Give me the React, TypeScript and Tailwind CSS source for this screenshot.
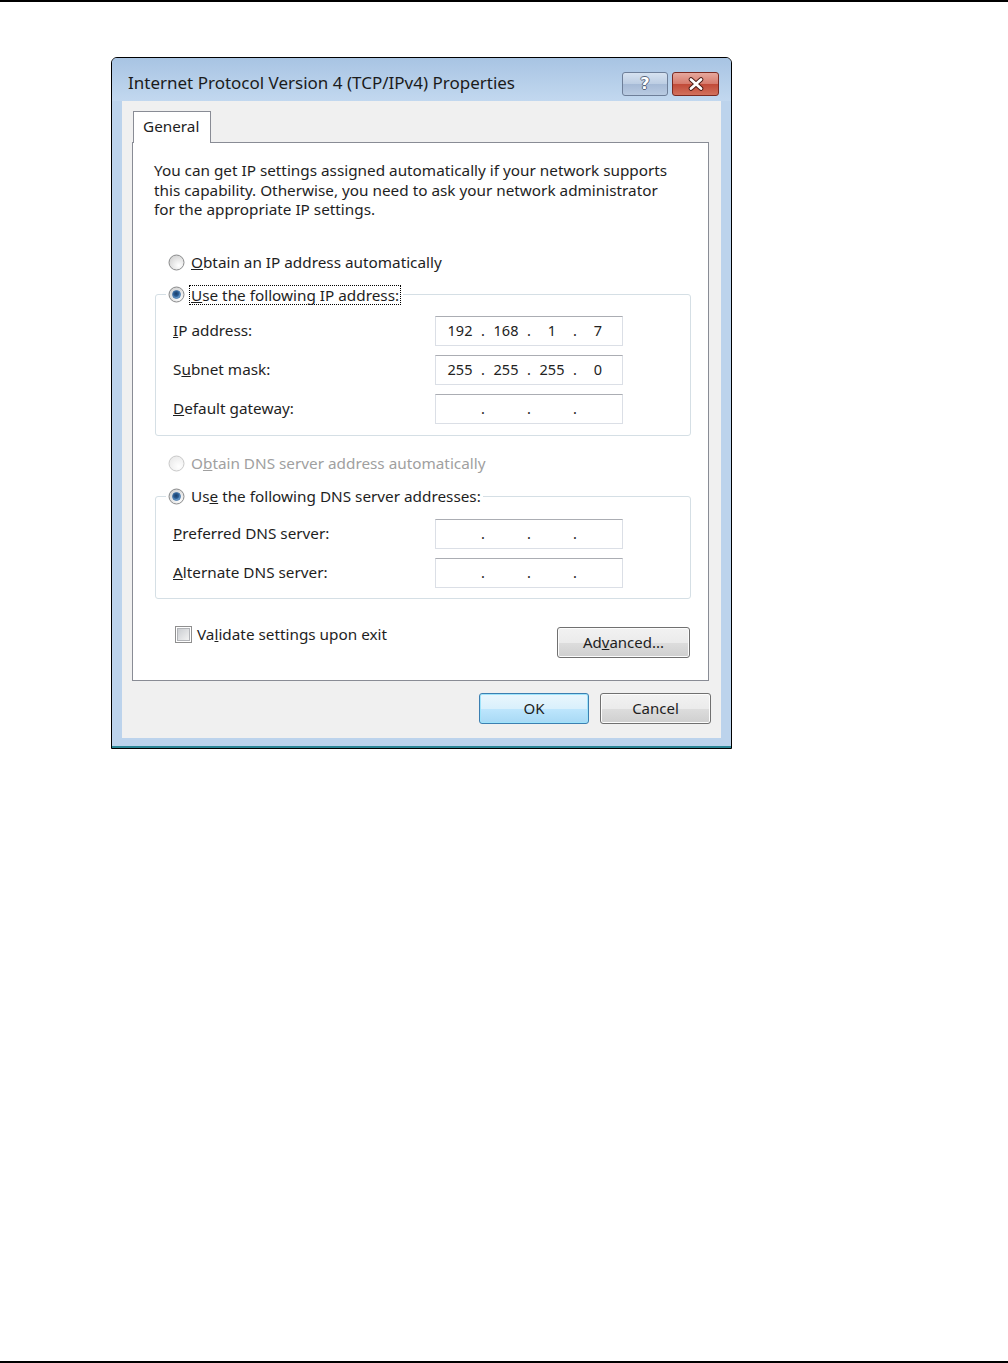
import { Fragment } from "react";

function Radio({ checked = false, disabled = false }: { checked?: boolean; disabled?: boolean }) {
  const ring = disabled ? "#c9c9c9" : "#8b8c8d";
  return (
    <svg width="17" height="17" viewBox="0 0 17 17" className="shrink-0">
      <defs>
        <radialGradient id={disabled ? "rfd" : "rf"} cx="0.65" cy="0.7" r="0.7">
          <stop offset="0" stopColor="#ffffff" />
          <stop offset="1" stopColor={disabled ? "#ebebeb" : "#d6d6d6"} />
        </radialGradient>
        <radialGradient id="rdot" cx="0.45" cy="0.4" r="0.6">
          <stop offset="0" stopColor="#1b3d66" />
          <stop offset="0.55" stopColor="#2a5d95" />
          <stop offset="1" stopColor="#8ec2ee" />
        </radialGradient>
      </defs>
      <circle cx="8.5" cy="8.5" r="7.5" fill={`url(#${disabled ? "rfd" : "rf"})`} stroke={ring} strokeWidth="1" />
      {checked && <circle cx="8.5" cy="8.5" r="4" fill="url(#rdot)" stroke="#3b6a9c" strokeWidth="0.8" />}
    </svg>
  );
}

function Checkbox() {
  return (
    <svg width="17" height="17" viewBox="0 0 17 17" className="shrink-0">
      <defs>
        <linearGradient id="cbg" x1="0" y1="0" x2="1" y2="1">
          <stop offset="0" stopColor="#c9ccd0" />
          <stop offset="1" stopColor="#f4f4f4" />
        </linearGradient>
      </defs>
      <rect x="0.5" y="0.5" width="16" height="16" fill="#ffffff" stroke="#8f8f8f" />
      <rect x="2.5" y="2.5" width="12" height="12" fill="url(#cbg)" stroke="#b2b4b8" />
    </svg>
  );
}

function IpBox({ parts }: { parts: string[] }) {
  return (
    <div className="flex h-[30px] w-[188px] items-center border border-[#dbdfe6] border-t-[#abadb3] bg-white pl-[4px] text-[14.5px] text-[#222]">
      {parts.map((p, i) => (
        <Fragment key={i}>
          {i > 0 && <span className="w-[6px] text-center">.</span>}
          <span className="w-[40px] text-center">{p}</span>
        </Fragment>
      ))}
    </div>
  );
}

function Field({ label, parts }: { label: React.ReactNode; parts: string[] }) {
  return (
    <div className="flex h-[30px] items-center">
      <span className="w-[262px] whitespace-nowrap">{label}</span>
      <IpBox parts={parts} />
    </div>
  );
}

const empty = ["", "", "", ""];

function Button({ children, primary = false, w }: { children: React.ReactNode; primary?: boolean; w: string }) {
  return (
    <div
      className={`flex h-[31px] items-center justify-center rounded-[3px] border text-[15px] text-[#1e1e1e] ${w} ${
        primary
          ? "border-[#3c7fb1] bg-[linear-gradient(to_bottom,#eaf6fd_0%,#d9f0fc_50%,#bee6fd_51%,#a7d9f5_100%)] shadow-[inset_0_0_0_1px_#9fe4fb]"
          : "border-[#707070] bg-[linear-gradient(to_bottom,#f2f2f2_0%,#ebebeb_50%,#dddddd_51%,#cfcfcf_100%)] shadow-[inset_0_0_0_1px_#fcfcfc]"
      }`}
    >
      {children}
    </div>
  );
}

export default function App() {
  return (
    <div className="flex h-[1363px] w-[1008px] flex-col bg-white font-['Noto_Sans','DejaVu_Sans',sans-serif] text-[15.3px] text-[#1e1e1e]">
      <div className="h-[2px] bg-black" />

      {/* Dialog */}
      <div className="ml-[111px] mt-[55px] flex w-[621px] flex-col rounded-t-[6px] border border-black bg-[#bcd3ec]">
        {/* Title bar */}
        <div className="flex h-[43px] items-start rounded-t-[5px] bg-[linear-gradient(to_bottom,#a8c4e3,#c2d8ef)]">
          <div className="flex-1 whitespace-nowrap pl-[16px] pt-[15px] text-[17px] leading-[20px] text-[#1b1b1b]">
            Internet Protocol Version 4 (TCP/IPv4) Properties
          </div>
          <div className="mr-[12px] mt-[14px] flex gap-[4px]">
            <div className="flex h-[24px] w-[46px] items-center justify-center rounded-[3px] border border-[#6e7f99] bg-[linear-gradient(to_bottom,#d6e2f0_0%,#bccde3_50%,#a6bad6_51%,#b9cbe2_100%)] font-['DejaVu_Sans',sans-serif] text-[16px] font-bold leading-none text-white [text-shadow:1px_0_#56657c,-1px_0_#56657c,0_1px_#56657c,0_-1px_#56657c]">
              ?
            </div>
            <div className="flex h-[24px] w-[47px] items-center justify-center rounded-[3px] border border-[#7a2a22] bg-[linear-gradient(to_bottom,#e6a89d_0%,#d67a6c_50%,#c14a38_51%,#d2705c_100%)]">
              <svg width="20" height="14" viewBox="0 0 20 14">
                <path d="M5 2.5 L15 11.5 M15 2.5 L5 11.5" stroke="#4a1a14" strokeWidth="4.6" strokeLinecap="round" />
                <path d="M5 2.5 L15 11.5 M15 2.5 L5 11.5" stroke="#ffffff" strokeWidth="2.8" strokeLinecap="round" />
              </svg>
            </div>
          </div>
        </div>

        {/* Client area */}
        <div className="mx-[10px] flex h-[637px] flex-col bg-[#f0f0f0] pt-[10px]">
          <div className="relative z-10 -mb-px ml-[11px] flex h-[32px] w-[78px] items-center border border-b-0 border-[#898c95] bg-white pb-[2px] pl-[9px]">
            General
          </div>

          <div className="ml-[10px] mr-[12px] flex h-[539px] flex-col border border-[#898c95] bg-white pt-[18px]">
            <p className="ml-[21px] whitespace-nowrap leading-[19.5px]">
              You can get IP settings assigned automatically if your network supports
              <br />
              this capability. Otherwise, you need to ask your network administrator
              <br />
              for the appropriate IP settings.
            </p>

            <div className="ml-[35px] mt-[33px] flex h-[20px] items-center gap-[6px]">
              <Radio />
              <span>
                <span className="underline">O</span>btain an IP address automatically
              </span>
            </div>

            <fieldset className="ml-[22px] mr-[17px] mt-[12px] rounded-[3px] border border-[#d5dfe5] p-0">
              <legend className="ml-[10px] flex h-[20px] items-center gap-[4px] px-[2px]">
                <Radio checked />
                <span className="border border-dotted border-black px-[1px] leading-[18px]">
                  <span className="underline">U</span>se the following IP address:
                </span>
              </legend>
              <div className="flex flex-col gap-[9px] pb-[11px] pl-[17px] pt-[11px]">
                <Field label={<><span className="underline">I</span>P address:</>} parts={["192", "168", "1", "7"]} />
                <Field label={<>S<span className="underline">u</span>bnet mask:</>} parts={["255", "255", "255", "0"]} />
                <Field label={<><span className="underline">D</span>efault gateway:</>} parts={empty} />
              </div>
            </fieldset>

            <div className="ml-[35px] mt-[18px] flex h-[20px] items-center gap-[6px] text-[#a0a0a0]">
              <Radio disabled />
              <span>
                O<span className="underline">b</span>tain DNS server address automatically
              </span>
            </div>

            <fieldset className="ml-[22px] mr-[17px] mt-[13px] rounded-[3px] border border-[#d5dfe5] p-0">
              <legend className="ml-[10px] flex h-[20px] items-center gap-[6px] px-[2px]">
                <Radio checked />
                <span>
                  Us<span className="underline">e</span> the following DNS server addresses:
                </span>
              </legend>
              <div className="flex flex-col gap-[9px] pb-[10px] pl-[17px] pt-[12px]">
                <Field label={<><span className="underline">P</span>referred DNS server:</>} parts={empty} />
                <Field label={<><span className="underline">A</span>lternate DNS server:</>} parts={empty} />
              </div>
            </fieldset>

            <div className="mt-[27px] flex items-start">
              <div className="ml-[42px] flex h-[18px] items-center gap-[5px]">
                <Checkbox />
                <span>
                  Va<span className="underline">l</span>idate settings upon exit
                </span>
              </div>
              <div className="ml-auto mr-[18px] mt-[1px]">
                <Button w="w-[133px]">
                  <span>
                    Ad<span className="underline">v</span>anced...
                  </span>
                </Button>
              </div>
            </div>
          </div>

          <div className="mt-[12px] flex justify-end gap-[11px] pr-[10px]">
            <Button primary w="w-[110px]">OK</Button>
            <Button w="w-[111px]">Cancel</Button>
          </div>
        </div>

        <div className="h-[8px]" />
        <div className="h-[2px] bg-[#2a8595]" />
      </div>

      <div className="flex-1" />
      <div className="h-[2px] bg-black" />
    </div>
  );
}
